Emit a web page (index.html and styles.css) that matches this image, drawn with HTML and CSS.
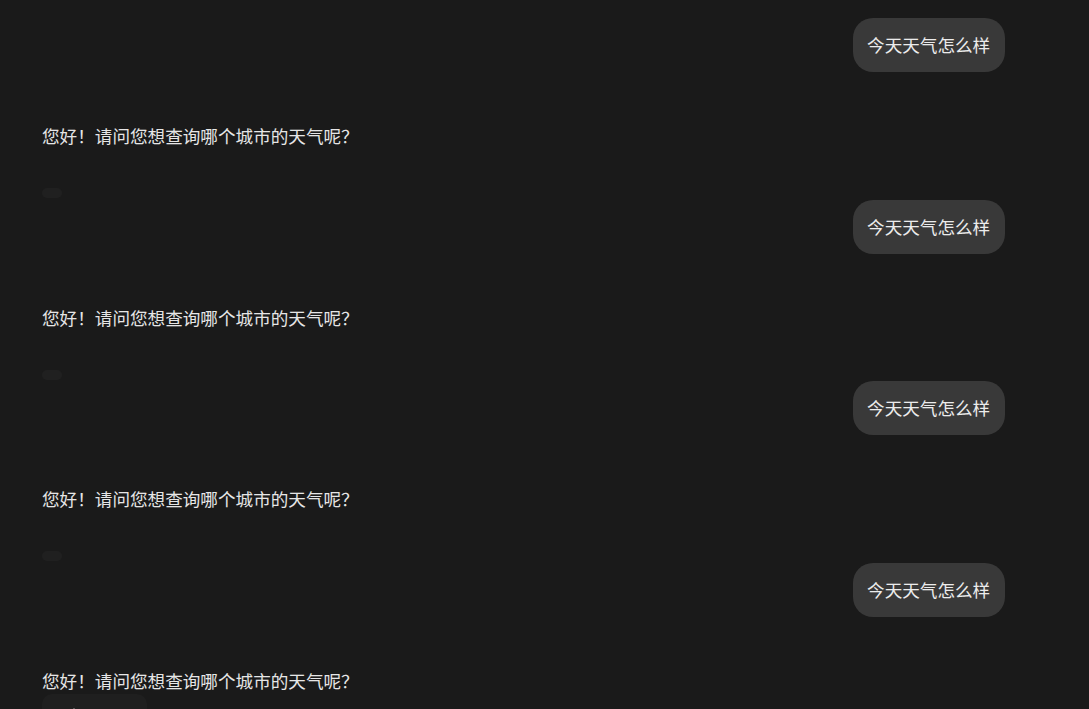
FILE: index.html
```html
<!DOCTYPE html>
<html lang="zh-CN">
<head>
    <meta charset="UTF-8">
    <meta name="viewport" content="width=device-width, initial-scale=1.0">
    <title>Chat</title>
    <link rel="stylesheet" href="styles.css">
</head>
<body>

    <div class="chat">
        <!-- round 1 -->
        <div class="turn">
            <div class="user-row"><div class="bubble">今天天气怎么样</div></div>
            <div class="answer">
                <p class="answer-text">您好！请问您想查询哪个城市的天气呢？</p>
                <div class="actions"></div>
            </div>
        </div>

        <!-- round 2 -->
        <div class="turn">
            <div class="user-row"><div class="bubble">今天天气怎么样</div></div>
            <div class="answer">
                <p class="answer-text">您好！请问您想查询哪个城市的天气呢？</p>
                <div class="actions"></div>
            </div>
        </div>

        <!-- round 3 -->
        <div class="turn">
            <div class="user-row"><div class="bubble">今天天气怎么样</div></div>
            <div class="answer">
                <p class="answer-text">您好！请问您想查询哪个城市的天气呢？</p>
                <div class="actions"></div>
            </div>
        </div>

        <!-- round 4, still loading -->
        <div class="turn">
            <div class="user-row"><div class="bubble">今天天气怎么样</div></div>
            <div class="answer">
                <p class="answer-text">您好！请问您想查询哪个城市的天气呢？</p>
                <div class="loading-box"><span class="loading-dot"></span></div>
            </div>
        </div>
    </div>

</body>
</html>
```

FILE: styles.css
```css
html, body {
    margin: 0;
    height: 100%;
    overflow: hidden;
}

body {
    background-color: #1a1a1a;
    color: #e6e6e6;
    font-family: "Noto Sans CJK SC", "Noto Sans", sans-serif;
    font-size: 17.6px;
}

.chat {
    display: flex;
    flex-direction: column;
    padding: 18px 84.5px 0 42px;
}

.turn {
    display: flex;
    flex-direction: column;
    padding-bottom: 1.67px;
}

.user-row {
    display: flex;
    justify-content: flex-end;
}

.bubble {
    background-color: #393939;
    color: #ececec;
    border-radius: 20px;
    padding: 14px 14.3px;
    line-height: 26px;
}

.answer {
    display: flex;
    flex-direction: column;
    align-items: flex-start;
    margin-top: 51px;
}

.answer-text {
    margin: 0;
    line-height: 26px;
}

.actions {
    width: 20px;
    height: 10px;
    margin-top: 39px;
    border-radius: 5px;
    background-color: #202020;
}

.loading-box {
    width: 105px;
    height: 44px;
    border-radius: 10px;
    background-color: #1f1f1f;
    position: relative;
}

.loading-dot {
    position: absolute;
    left: 31px;
    top: 14px;
    width: 2px;
    height: 4px;
    background-color: #555;
}
```
